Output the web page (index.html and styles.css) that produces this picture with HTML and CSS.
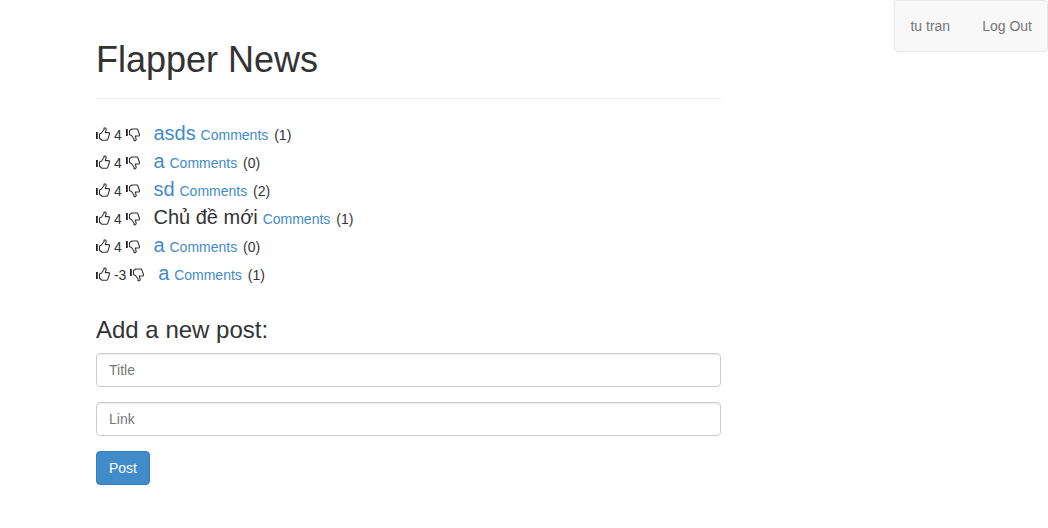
FILE: index.html
```html
<!DOCTYPE html>
<html lang="en">
<head>
<meta charset="utf-8">
<title>Flapper News</title>
<link rel="stylesheet" href="styles.css">
</head>
<body>
<svg class="sprite" aria-hidden="true">
  <symbol id="up" viewBox="0 0 15 15">
    <path d="M0 5h1.8v7h-1.8z" fill="#222"/>
    <path d="M3.5 7 L5.5 6 L8 2.5 V1 H9.6 L10.2 2.4 L9.3 5.6 H13 L13.6 6.6 L11.9 12 L11 13.2 H6 L3.5 11.2 Z" fill="none" stroke="#333" stroke-width="1.1" stroke-linejoin="round"/>
  </symbol>
  <symbol id="down" viewBox="0 0 15 15">
    <path d="M0 2h1.8v7h-1.8z" fill="#222"/>
    <path d="M3.5 7.5 L5.5 8.5 L8 12 V13.8 H9.6 L10.2 12.4 L9.3 9 H13 L13.6 8 L11.9 2.8 L11 2 H6 L3.5 3.5 Z" fill="none" stroke="#333" stroke-width="1.1" stroke-linejoin="round"/>
  </symbol>
</svg>
<div class="page">
  <main class="content">
    <header class="page-header"><h1>Flapper News</h1></header>
    <div class="post">
      <button class="vote" aria-label="Upvote"><svg><use href="#up"/></svg></button> 4 <button class="vote" aria-label="Downvote"><svg><use href="#down"/></svg></button>
      <span class="title"><a href="#">asds</a></span> <a class="comments" href="#">Comments</a> (1)
    </div>
    <div class="post">
      <button class="vote" aria-label="Upvote"><svg><use href="#up"/></svg></button> 4 <button class="vote" aria-label="Downvote"><svg><use href="#down"/></svg></button>
      <span class="title"><a href="#">a</a></span> <a class="comments" href="#">Comments</a> (0)
    </div>
    <div class="post">
      <button class="vote" aria-label="Upvote"><svg><use href="#up"/></svg></button> 4 <button class="vote" aria-label="Downvote"><svg><use href="#down"/></svg></button>
      <span class="title"><a href="#">sd</a></span> <a class="comments" href="#">Comments</a> (2)
    </div>
    <div class="post">
      <button class="vote" aria-label="Upvote"><svg><use href="#up"/></svg></button> 4 <button class="vote" aria-label="Downvote"><svg><use href="#down"/></svg></button>
      <span class="title" lang="vi">Chủ đề mới</span> <a class="comments" href="#">Comments</a> (1)
    </div>
    <div class="post">
      <button class="vote" aria-label="Upvote"><svg><use href="#up"/></svg></button> 4 <button class="vote" aria-label="Downvote"><svg><use href="#down"/></svg></button>
      <span class="title"><a href="#">a</a></span> <a class="comments" href="#">Comments</a> (0)
    </div>
    <div class="post">
      <button class="vote" aria-label="Upvote"><svg><use href="#up"/></svg></button> -3 <button class="vote" aria-label="Downvote"><svg><use href="#down"/></svg></button>
      <span class="title"><a href="#">a</a></span> <a class="comments" href="#">Comments</a> (1)
    </div>
    <form class="post-form">
      <h3>Add a new post:</h3>
      <input class="field" type="text" placeholder="Title" aria-label="Title">
      <input class="field" type="text" placeholder="Link" aria-label="Link">
      <button class="submit" type="submit">Post</button>
    </form>
  </main>
  <nav class="navbar">
    <a href="#">tu tran</a>
    <a href="#">Log Out</a>
  </nav>
</div>
</body>
</html>
```
FILE: styles.css
```css
* {
  box-sizing: border-box;
}

body {
  margin: 0;
  background: #fff;
  color: #333;
  font: 14px/20px "Liberation Sans", Arial, sans-serif;
}

a {
  color: #428bca;
  text-decoration: none;
}

.sprite {
  display: none;
}

.page {
  display: grid;
  grid-template-columns: 96fr 625fr 327fr;
  align-items: start;
}

.content {
  grid-column: 2;
  padding-top: 40px;
}

.navbar {
  grid-column: 3;
  justify-self: end;
  display: flex;
  gap: 2px;
  background: #f8f8f8;
  border: 1px solid #e7e7e7;
  border-radius: 4px;
}

.navbar a {
  padding: 15px;
  color: #777;
}

.page-header {
  margin-bottom: 20px;
  padding-bottom: 18px;
  border-bottom: 1px solid #eee;
}

h1,
h3 {
  margin: 0;
  font-weight: 400;
}

h1 {
  font-size: 36px;
  line-height: 40px;
}

h3 {
  margin-bottom: 10px;
  font-size: 24px;
  line-height: 26px;
}

.post {
  line-height: 20px;
}

.vote {
  width: 14px;
  height: 14px;
  padding: 0;
  border: 0;
  background: none;
  vertical-align: -1px;
  cursor: pointer;
}

.vote svg {
  display: block;
  width: 15px;
  height: 15px;
}

.title {
  margin-left: 10px;
  font-size: 20px;
  line-height: 28px;
}

.comments {
  margin: 0 2px 0 1px;
}

.post-form {
  margin-top: 30px;
}

.field {
  display: block;
  width: 100%;
  height: 34px;
  margin-bottom: 15px;
  padding: 6px 12px;
  border: 1px solid #ccc;
  border-radius: 4px;
  box-shadow: inset 0 1px 1px rgba(0, 0, 0, 0.075);
  font: inherit;
}

.field::placeholder {
  color: #777;
}

.submit {
  padding: 6px 12px;
  border: 1px solid #357ebd;
  border-radius: 4px;
  background: #428bca;
  color: #fff;
  font: inherit;
}
```
